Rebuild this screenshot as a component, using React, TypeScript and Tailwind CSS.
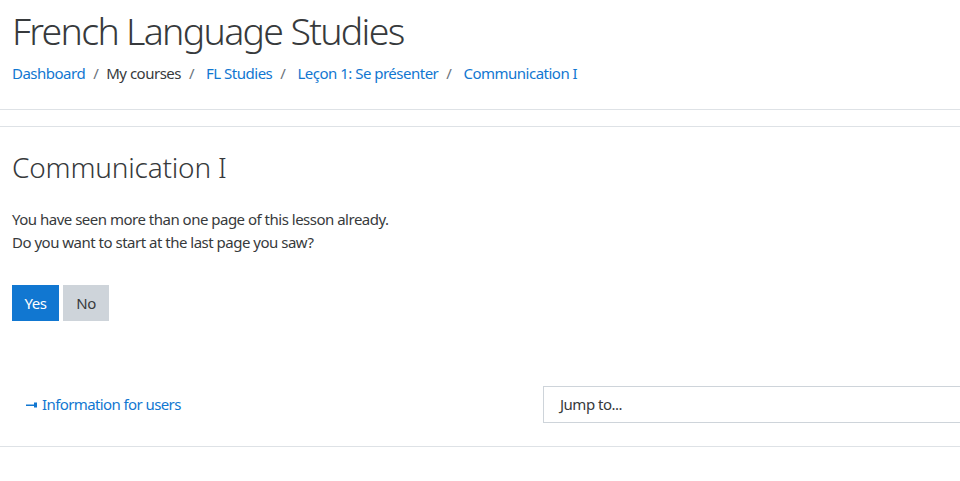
import React from "react";

const crumbs = [
  { label: "Dashboard", link: true },
  { label: "My courses", link: false },
  { label: "FL Studies", link: true },
  { label: "Leçon 1: Se présenter", link: true },
  { label: "Communication I", link: true },
];

export default function App() {
  return (
    <div className="min-h-screen overflow-x-hidden bg-white text-[#373a3c] font-['Noto_Sans',sans-serif] text-[15px] leading-[1.5] tracking-[-0.5px]">
      {/* Page header */}
      <header className="px-3 pt-[8px] pb-[24px] border-b border-[#dee2e6]">
        <h1 className="text-[37.5px] leading-[1.2] font-light tracking-[-1.7px]">French Language Studies</h1>
        <nav className="mt-[9px] flex items-center">
          {crumbs.map((c, i) => (
            <React.Fragment key={c.label}>
              {i > 0 && <span className="px-2 text-[#6a737b]">/</span>}
              {c.link ? (
                <a href="#" className={`text-[#1177d1] ${i > 1 ? "pl-1" : ""}`}>{c.label}</a>
              ) : (
                <span>{c.label}</span>
              )}
            </React.Fragment>
          ))}
        </nav>
      </header>

      {/* Lesson content */}
      <main className="mt-[16px] border-t border-[#dee2e6] px-3">
        <h2 className="mt-[24px] text-[28px] leading-[1.2] font-light tracking-[-0.2px]">Communication I</h2>
        <div className="mt-[24px]">
          <p>You have seen more than one page of this lesson already.</p>
          <p>Do you want to start at the last page you saw?</p>
        </div>
        <div className="mt-[32px] flex gap-1">
          <button className="h-9 w-[47px] bg-[#1177d1] text-white">Yes</button>
          <button className="h-9 w-[46px] bg-[#ced4da] text-[#373a3c]">No</button>
        </div>

        <div className="mt-[65px] flex items-center pb-[23px] border-b border-[#dee2e6] -mx-3 pl-3">
          <div className="w-[531px] shrink-0 flex items-center pl-[14px]">
            <a href="#" className="flex items-center gap-1 text-[#1177d1] tracking-[-0.6px]">
              <svg width="12" height="6" viewBox="0 0 12 6" className="shrink-0">
                <rect x="0" y="2.5" width="8" height="1.5" fill="#1177d1" />
                <rect x="8" y="0.5" width="3" height="5" fill="#1177d1" />
              </svg>
              Information for users
            </a>
          </div>
          <div className="w-[425px] shrink-0">
            <div className="h-[37px] border border-[#ced4da] flex items-center px-[16px]">Jump to...</div>
          </div>
        </div>
      </main>
    </div>
  );
}
